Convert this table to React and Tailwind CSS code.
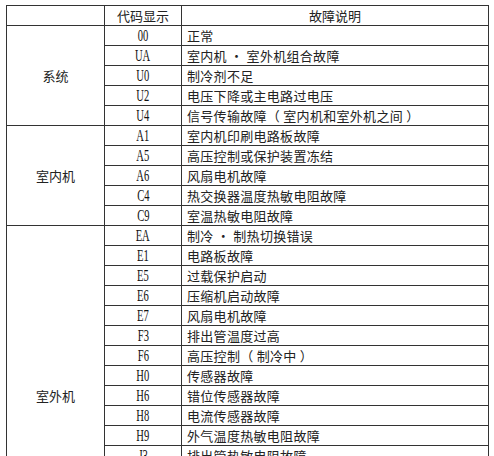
import React from "react";

const groups = [
  {
    name: "系统",
    items: [
      ["00", "正常"],
      ["UA", "室内机 · 室外机组合故障"],
      ["U0", "制冷剂不足"],
      ["U2", "电压下降或主电路过电压"],
      ["U4", "信号传输故障（ 室内机和室外机之间 ）"],
    ],
  },
  {
    name: "室内机",
    items: [
      ["A1", "室内机印刷电路板故障"],
      ["A5", "高压控制或保护装置冻结"],
      ["A6", "风扇电机故障"],
      ["C4", "热交换器温度热敏电阻故障"],
      ["C9", "室温热敏电阻故障"],
    ],
  },
  {
    name: "室外机",
    items: [
      ["EA", "制冷 · 制热切换错误"],
      ["E1", "电路板故障"],
      ["E5", "过载保护启动"],
      ["E6", "压缩机启动故障"],
      ["E7", "风扇电机故障"],
      ["F3", "排出管温度过高"],
      ["F6", "高压控制（ 制冷中 ）"],
      ["H0", "传感器故障"],
      ["H6", "错位传感器故障"],
      ["H8", "电流传感器故障"],
      ["H9", "外气温度热敏电阻故障"],
      ["J3", "排出管热敏电阻故障"],
      ["J5", "吸入管热敏电阻故障"],
      ["J6", "热交换器热敏电阻故障"],
      ["L4", "散热片温度上升"],
      ["L5", "输出过电流"],
      ["P4", "散热片热敏电阻故障"],
    ],
  },
];

const cjk = { fontFamily: '"Noto Sans CJK SC", "Liberation Sans", sans-serif' };

const Code = ({ children }) => (
  <span
    className="inline-block scale-x-[0.66] text-[16px] leading-none text-[#111]"
    style={{ fontFamily: '"Liberation Serif", "DejaVu Serif", serif' }}
  >
    {children}
  </span>
);

export default function App() {
  return (
    <div className="h-[456px] w-[494px] overflow-hidden bg-white pl-[6px] pt-[5px]" style={cjk}>
      <table className="w-[483px] table-fixed border-collapse text-[13px] text-[#222]">
        <colgroup>
          <col className="w-[98px]" />
          <col className="w-[77px]" />
          <col />
        </colgroup>
        <thead>
          <tr className="h-[20px]">
            <th className="border border-[#333] p-0 font-normal"></th>
            <th className="border border-[#333] p-0 font-normal leading-none">代码显示</th>
            <th className="border border-[#333] p-0 font-normal leading-none">故障说明</th>
          </tr>
        </thead>
        <tbody>
          {groups.map((group) =>
            group.items.map(([code, text], i) => (
              <tr key={code} className="h-[20px]">
                {i === 0 && (
                  <td
                    rowSpan={group.items.length}
                    className="border border-[#333] p-0 text-center align-middle leading-none"
                  >
                    {group.name}
                  </td>
                )}
                <td className="border border-[#333] p-0 text-center leading-none">
                  <Code>{code}</Code>
                </td>
                <td className="whitespace-nowrap border border-[#333] py-0 pl-[5px] leading-none tracking-[0.3px]">
                  {text}
                </td>
              </tr>
            ))
          )}
        </tbody>
      </table>
    </div>
  );
}
